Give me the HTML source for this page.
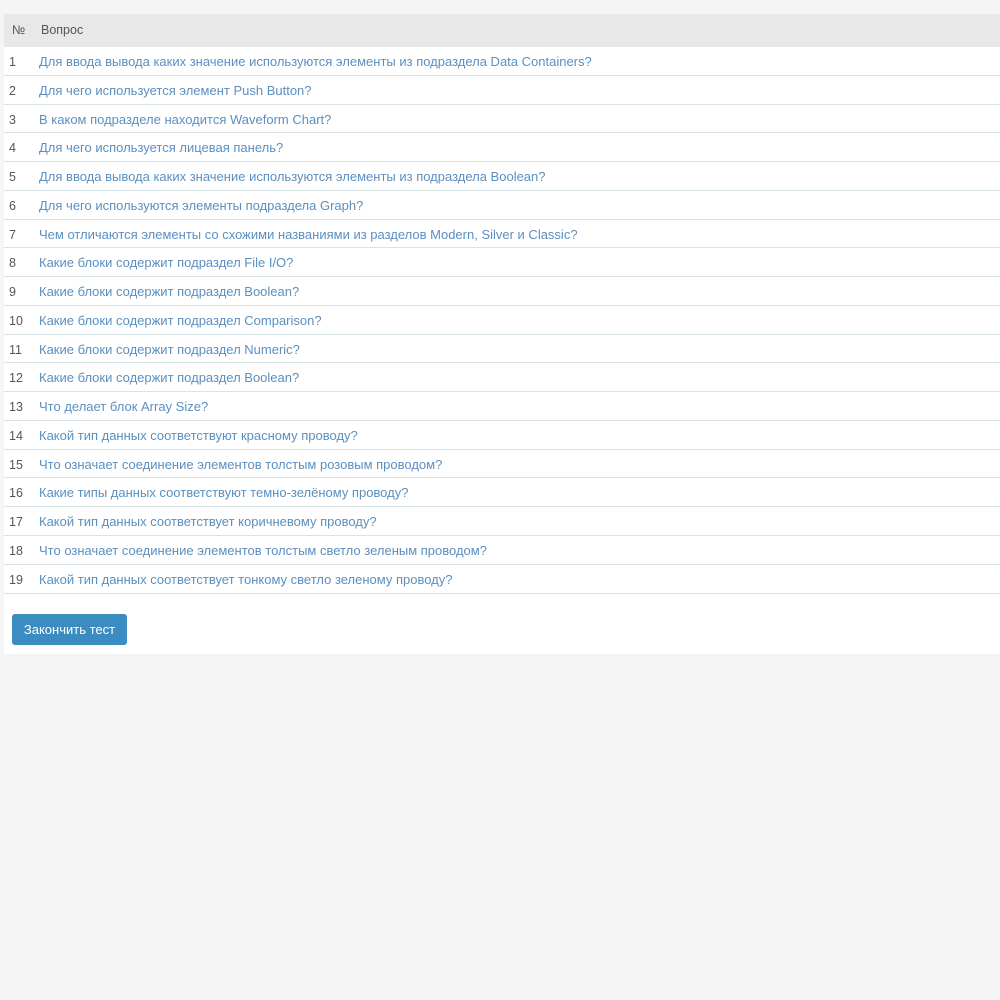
<!DOCTYPE html>
<html><head><meta charset="utf-8"><style>
body{margin:0;background:#f5f5f5;font-family:"Liberation Sans",sans-serif;font-size:13px;}
.panel{position:absolute;left:4px;top:14px;width:996px;height:640px;background:#fff;}
.head{height:33px;background:#e8e8e8;color:#555;line-height:33px;position:relative;font-size:12.5px;}
.row{height:27.78px;border-bottom:1px solid #d6e4e6;position:relative;line-height:30px;}
.n{position:absolute;left:5px;color:#555;font-size:12.5px;}
.q{position:absolute;left:35px;color:#5b8fc0;}
.btn{position:absolute;left:8px;top:600px;width:115px;height:31px;background:#3a8cc1;border-radius:3px;color:#fff;font-size:13px;line-height:31px;text-align:center;}
</style></head><body>
<div class="panel">
<div class="head"><span class="n" style="left:8px">№</span><span class="q" style="left:37px;color:#555">Вопрос</span></div>
<div class="row"><span class="n">1</span><span class="q">Для ввода вывода каких значение используются элементы из подраздела Data Containers?</span></div>
<div class="row"><span class="n">2</span><span class="q">Для чего используется элемент Push Button?</span></div>
<div class="row"><span class="n">3</span><span class="q">В каком подразделе находится Waveform Chart?</span></div>
<div class="row"><span class="n">4</span><span class="q">Для чего используется лицевая панель?</span></div>
<div class="row"><span class="n">5</span><span class="q">Для ввода вывода каких значение используются элементы из подраздела Boolean?</span></div>
<div class="row"><span class="n">6</span><span class="q">Для чего используются элементы подраздела Graph?</span></div>
<div class="row"><span class="n">7</span><span class="q">Чем отличаются элементы со схожими названиями из разделов Modern, Silver и Classic?</span></div>
<div class="row"><span class="n">8</span><span class="q">Какие блоки содержит подраздел File I/O?</span></div>
<div class="row"><span class="n">9</span><span class="q">Какие блоки содержит подраздел Boolean?</span></div>
<div class="row"><span class="n">10</span><span class="q">Какие блоки содержит подраздел Comparison?</span></div>
<div class="row"><span class="n">11</span><span class="q">Какие блоки содержит подраздел Numeric?</span></div>
<div class="row"><span class="n">12</span><span class="q">Какие блоки содержит подраздел Boolean?</span></div>
<div class="row"><span class="n">13</span><span class="q">Что делает блок Array Size?</span></div>
<div class="row"><span class="n">14</span><span class="q">Какой тип данных соответствуют красному проводу?</span></div>
<div class="row"><span class="n">15</span><span class="q">Что означает соединение элементов толстым розовым проводом?</span></div>
<div class="row"><span class="n">16</span><span class="q">Какие типы данных соответствуют темно-зелёному проводу?</span></div>
<div class="row"><span class="n">17</span><span class="q">Какой тип данных соответствует коричневому проводу?</span></div>
<div class="row"><span class="n">18</span><span class="q">Что означает соединение элементов толстым светло зеленым проводом?</span></div>
<div class="row"><span class="n">19</span><span class="q">Какой тип данных соответствует тонкому светло зеленому проводу?</span></div>
<div class="btn">Закончить тест</div>
</div>
</body></html>
